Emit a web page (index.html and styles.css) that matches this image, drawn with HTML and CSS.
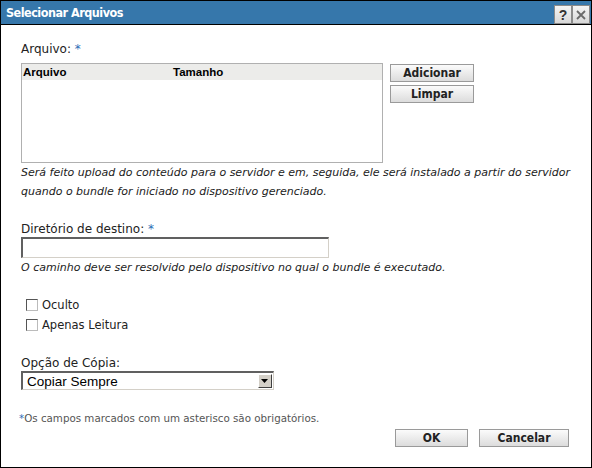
FILE: index.html
```html
<!DOCTYPE html>
<html>
<head>
<meta charset="utf-8">
<link rel="stylesheet" href="styles.css">
</head>
<body>
<div class="dialog">
  <div class="titlebar">
    <span class="title">Selecionar Arquivos</span>
    <div class="tb-btns">
      <span class="tb-btn">?</span>
      <span class="tb-btn">
        <svg width="12" height="12" viewBox="0 0 12 12"><path d="M2 2 L10 10 M10 2 L2 10" stroke="#6a6a6a" stroke-width="1.8"/></svg>
      </span>
    </div>
  </div>
  <div class="content">
    <div class="label l-arquivo">Arquivo: <span class="req">*</span></div>
    <div class="file-row">
      <div class="filetable">
        <div class="th">
          <span class="th-name">Arquivo</span>
          <span class="th-size">Tamanho</span>
        </div>
      </div>
      <div class="side-btns">
        <button class="btn btn-side">Adicionar</button>
        <button class="btn btn-side">Limpar</button>
      </div>
    </div>
    <div class="help h1">Será feito upload do conteúdo para o servidor e em, seguida, ele será instalado a partir do servidor<br>quando o bundle for iniciado no dispositivo gerenciado.</div>
    <div class="label l-dir">Diretório de destino: <span class="req">*</span></div>
    <div class="textinput"></div>
    <div class="help h2">O caminho deve ser resolvido pelo dispositivo no qual o bundle é executado.</div>
    <div class="checks">
      <label class="check"><span class="box"></span>Oculto</label>
      <label class="check"><span class="box"></span>Apenas Leitura</label>
    </div>
    <div class="label l-opt">Opção de Cópia:</div>
    <div class="select">
      <span class="sel-text">Copiar Sempre</span>
      <span class="sel-arrow"><svg width="8" height="5" viewBox="0 0 8 5"><path d="M0 0 H7 L3.5 4 Z" fill="#000"/></svg></span>
    </div>
    <div class="note"><span class="req">*</span>Os campos marcados com um asterisco são obrigatórios.</div>
    <div class="footer">
      <button class="btn btn-ok">OK</button>
      <button class="btn btn-cancel">Cancelar</button>
    </div>
  </div>
</div>
</body>
</html>
```

FILE: styles.css
```css
html, body {
  margin: 0;
  padding: 0;
  background: #fff;
}
.dialog {
  width: 592px;
  height: 468px;
  box-sizing: border-box;
  border: 1px solid #000;
  background: #fff;
  font-family: "DejaVu Sans", Verdana, sans-serif;
  color: #222;
}
.titlebar {
  height: 23px;
  background: #3677ab;
  border-bottom: 1px solid #000;
  display: flex;
  align-items: center;
  justify-content: space-between;
  padding-left: 5px;
}
.title {
  color: #fff;
  font-family: "DejaVu Sans Condensed", "Liberation Sans", Arial, sans-serif;
  font-stretch: condensed;
  font-weight: bold;
  font-size: 12.5px;
  letter-spacing: -0.5px;
}
.tb-btns {
  display: flex;
  margin-right: 1px;
  align-self: flex-start;
  margin-top: 4px;
}
.tb-btn {
  width: 16px;
  height: 17px;
  background: linear-gradient(#f4f4f4, #d8d8d8);
  border: 1px solid #8a8a8a;
  display: flex;
  align-items: center;
  justify-content: center;
  font-family: "Liberation Sans", Arial, sans-serif;
  font-weight: bold;
  font-size: 14px;
  color: #333;
}
.content {
  padding: 0 0 0 20px;
  display: flex;
  flex-direction: column;
}
.label {
  font-size: 12px;
  color: #222;
  line-height: 14px;
}
.req {
  color: #2b6cb5;
}
.l-arquivo {
  margin-top: 17px;
}
.file-row {
  display: flex;
  margin-top: 7px;
}
.filetable {
  width: 360px;
  height: 98px;
  border: 1px solid #b0b0b0;
  background: #fff;
}
.th {
  height: 16px;
  background: #ececea;
  display: flex;
  align-items: center;
  font-family: "Liberation Sans", Arial, sans-serif;
  font-weight: bold;
  font-size: 11.5px;
  color: #000;
}
.th-name {
  width: 150px;
  padding-left: 1px;
}
.side-btns {
  display: flex;
  flex-direction: column;
  gap: 3px;
  margin-left: 7px;
  margin-top: 1px;
}
.btn {
  font-family: "DejaVu Sans Condensed", "Liberation Sans", Arial, sans-serif;
  font-stretch: condensed;
  font-weight: bold;
  font-size: 12px;
  color: #222;
  background: linear-gradient(#fbfbfb, #dcdcdc);
  border: 1px solid #9a9a9a;
  padding: 0;
  margin: 0;
  display: flex;
  align-items: center;
  justify-content: center;
}
.btn-side {
  width: 84px;
  height: 18px;
}
.help {
  font-style: italic;
  font-size: 11px;
  color: #222;
}
.h1 {
  line-height: 19px;
  margin-top: 0px;
}
.l-dir {
  margin-top: 21px;
}
.textinput {
  width: 305px;
  height: 18px;
  margin-top: 1px;
  border-style: solid;
  border-color: #606060 #d4d0c8 #d4d0c8 #606060;
  border-width: 2px 1px 1px 2px;
  background: #fff;
}
.h2 {
  margin-top: 3px;
  line-height: 14px;
}
.checks {
  margin-top: 23px;
  display: flex;
  flex-direction: column;
  gap: 6px;
  padding-left: 5px;
}
.check {
  display: flex;
  align-items: center;
  font-size: 11.5px;
  line-height: 14px;
  color: #222;
}
.box {
  width: 10px;
  height: 10px;
  border: 1px solid #555;
  border-right-color: #bbb;
  border-bottom-color: #bbb;
  background: #fff;
  margin-right: 4px;
}
.l-opt {
  margin-top: 24px;
}
.select {
  width: 250px;
  height: 16px;
  margin-top: 1px;
  border-style: solid;
  border-color: #606060 #d4d0c8 #d4d0c8 #606060;
  border-width: 2px 1px 1px 2px;
  display: flex;
  justify-content: space-between;
  align-items: center;
  background: #fff;
}
.sel-text {
  font-family: "Liberation Sans", Arial, sans-serif;
  font-size: 13.5px;
  color: #000;
  padding-left: 4px;
}
.sel-arrow {
  width: 14px;
  height: 14px;
  margin-right: 1px;
  background: #d4d0c8;
  border: 1px solid;
  border-color: #fff #404040 #404040 #fff;
  box-sizing: border-box;
  display: flex;
  align-items: center;
  justify-content: center;
}
.note {
  margin-top: 21px;
  margin-left: -2px;
  font-size: 10.3px;
  color: #555;
  line-height: 14px;
}
.footer {
  display: flex;
  justify-content: flex-end;
  gap: 11px;
  margin-right: 22px;
  margin-top: 4px;
}
.btn-ok {
  width: 73px;
  height: 18px;
}
.btn-cancel {
  width: 90px;
  height: 18px;
}
```
